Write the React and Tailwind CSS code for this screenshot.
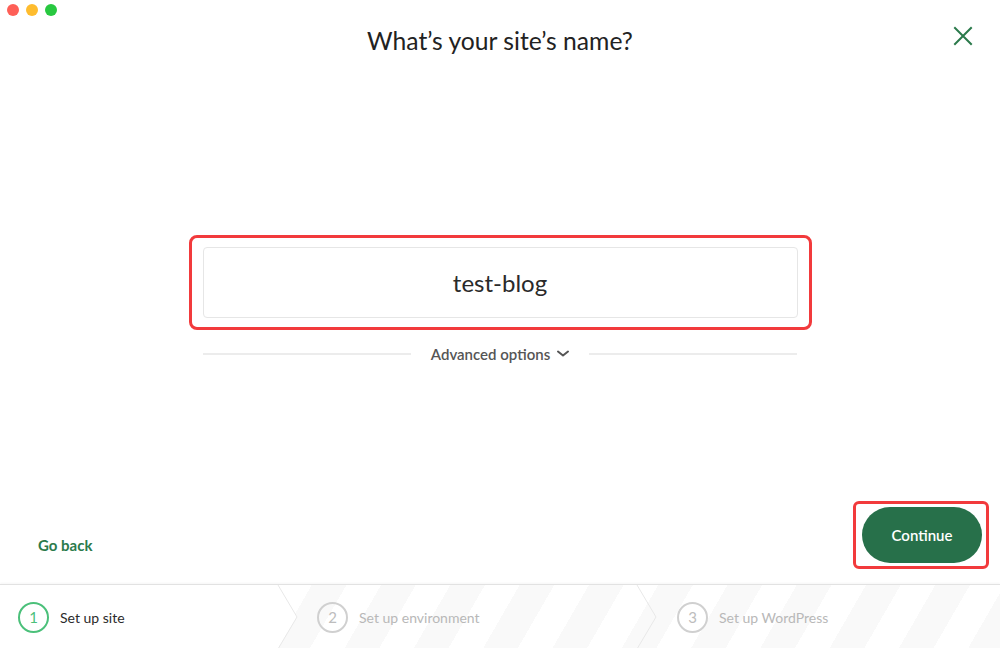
import React from "react";

function Step({ n, label, active }) {
  return (
    <div className="flex items-center gap-[11px]">
      <div
        className={
          "w-[31px] h-[31px] rounded-full flex items-center justify-center text-[15px] " +
          (active
            ? "border-2 border-[#4bc07a] text-[#4bc07a]"
            : "border-2 border-[#d0d0d0] text-[#bdbdbd]")
        }
      >
        {n}
      </div>
      <span className={"text-[14px] " + (active ? "text-[#2b2b2b]" : "text-[#b8b8b8]")}>{label}</span>
    </div>
  );
}

export default function App() {
  return (
    <div
      className="w-[1000px] h-[648px] flex flex-col bg-white overflow-hidden"
      style={{ fontFamily: "Lato, 'Open Sans', sans-serif" }}
    >
      {/* header */}
      <div className="grid grid-cols-[1fr_auto_1fr] h-[80px]">
        <div className="flex gap-[7px] pl-[7px] pt-[4px]">
          <span className="w-[12px] h-[12px] rounded-full bg-[#fe5f57]" />
          <span className="w-[12px] h-[12px] rounded-full bg-[#febc2e]" />
          <span className="w-[12px] h-[12px] rounded-full bg-[#28c840]" />
        </div>
        <h1 className="pt-[26px] text-[24.7px] leading-[30px] text-[#222222]">What’s your site’s name?</h1>
        <div className="flex justify-end pr-[27px] pt-[26px]">
          <svg width="20" height="20" viewBox="0 0 20 20" fill="none">
            <path d="M2 2 L18 18 M18 2 L2 18" stroke="#2b7a4b" strokeWidth="2" strokeLinecap="square" />
          </svg>
        </div>
      </div>

      {/* main */}
      <div className="flex flex-col items-center pt-[155px]">
        <div className="w-[623px] h-[95px] border-[3px] border-[#f23a3c] rounded-[8px] px-[11px] py-[9px]">
          <div className="h-full w-full border border-[#e6e6e6] rounded-[4px] flex items-center justify-center text-[24px] text-[#2a2a2a]">
            test-blog
          </div>
        </div>
        <div className="w-[594px] mt-[13px] flex items-center gap-[20px]">
          <div className="flex-1 h-[2px] bg-[#ececec]" />
          <div className="flex items-center gap-[7px] text-[15px] font-semibold text-[#555555]">
            Advanced options
            <svg width="12" height="8" viewBox="0 0 12 8" fill="none">
              <path d="M1 1.5 L6 5.5 L11 1.5" stroke="#555555" strokeWidth="2" strokeLinecap="round" strokeLinejoin="round" />
            </svg>
          </div>
          <div className="flex-1 h-[2px] bg-[#ececec]" />
        </div>
      </div>

      <div className="flex-1" />

      {/* actions */}
      <div className="flex items-end justify-between pl-[38px] pr-[11px] pb-[15px]">
        <span className="text-[15px] leading-[20px] pb-[14px] font-bold text-[#2b7a4b]">Go back</span>
        <div className="w-[136px] h-[68px] border-[3px] border-[#f23a3c] rounded-[6px] pl-[6px] pr-[4px] py-[3px]">
          <div className="w-full h-full rounded-full bg-[#27704a] flex items-center justify-center text-[15px] font-semibold text-white">
            Continue
          </div>
        </div>
      </div>

      {/* stepper */}
      <div className="relative h-[64px] border-t border-[#e2e2e2] shadow-[0_-1px_2px_rgba(0,0,0,0.04)] bg-[repeating-linear-gradient(120deg,#ffffff_0px,#ffffff_30px,#f9f9f9_30px,#f9f9f9_60px)] flex">
        <div className="w-[297px] bg-white [clip-path:polygon(0_0,278px_0,297px_50%,278px_100%,0_100%)] flex items-center pl-[18px] pt-[1px]">
          <Step n="1" label="Set up site" active />
        </div>
        <div className="w-[360px] flex items-center pl-[20px] pt-[1px]">
          <Step n="2" label="Set up environment" />
        </div>
        <div className="flex-1 flex items-center pl-[20px] pt-[1px]">
          <Step n="3" label="Set up WordPress" />
        </div>
        <svg className="absolute inset-0 pointer-events-none" width="1000" height="64" viewBox="0 0 1000 64" fill="none">
          <path d="M278 0 L297 32 L278 64" stroke="#e8e8e8" strokeWidth="1" />
          <path d="M637 0 L656 32 L637 64" stroke="#e8e8e8" strokeWidth="1" />
        </svg>
      </div>
    </div>
  );
}
